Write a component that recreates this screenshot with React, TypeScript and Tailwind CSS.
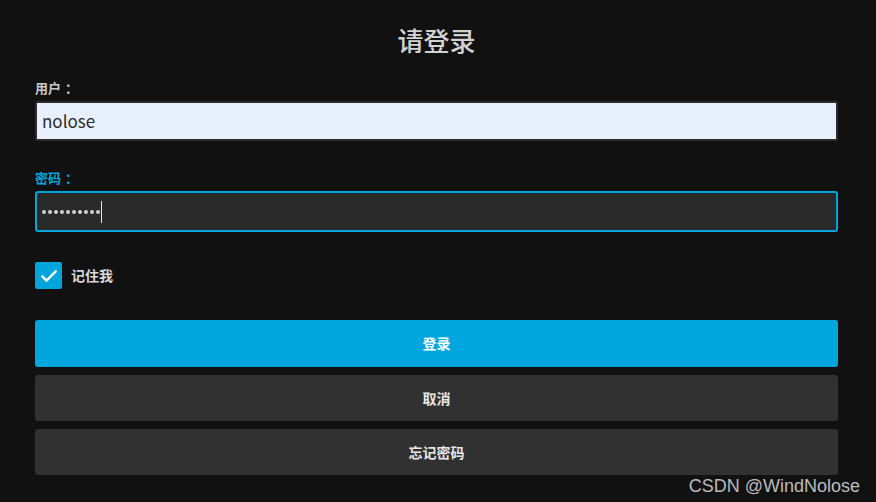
import React from "react";

const font = { fontFamily: '"Noto Sans CJK SC", "Noto Sans", sans-serif' };

const App = () => {
  return (
    <div
      className="relative h-[502px] w-[876px] overflow-hidden bg-[#111111] pl-[35px] pt-[22px]"
      style={font}
    >
      <div className="w-[803px]">
        {/* Title */}
        <h1 className="h-[36px] text-center text-[26px] leading-[36px] font-medium text-[#d2d2d2]">
          请登录
        </h1>

        {/* Username */}
        <label className="mt-[21px] block h-[18px] text-[13px] leading-[18px] font-bold text-[#c8c8c8]">
          用户<span className="ml-[4px]">：</span>
        </label>
        <div className="mt-[4px] flex h-[40px] items-center rounded-[2px] border-2 border-[#2b2b2b] bg-[#e8f0fe] px-[5px]">
          <span className="text-[17px] text-[#2a2a2a]">nolose</span>
        </div>

        {/* Password */}
        <label className="mt-[28px] block h-[18px] text-[13px] leading-[18px] font-bold text-[#00a5dc]">
          密码<span className="ml-[4px]">：</span>
        </label>
        <div className="mt-[4px] flex h-[41px] items-center rounded-[3px] border-2 border-[#00a5dc] bg-[#292929] px-[5px]">
          <div className="flex items-center gap-[2px]">
            {Array.from({ length: 10 }).map((_, i) => (
              <span key={i} className="h-[4px] w-[4px] rounded-full bg-[#d0d0d0]" />
            ))}
          </div>
          <span className="ml-[1px] h-[22px] w-[1px] bg-[#e8e8e8]" />
        </div>

        {/* Remember me */}
        <div className="mt-[30px] flex h-[27px] items-center gap-[9px]">
          <div className="flex h-[27px] w-[27px] items-center justify-center rounded-[2px] bg-[#00a5dc]">
            <svg width="20" height="20" viewBox="0 0 24 24" fill="none">
              <path
                d="M4 12.5l5 5L20 6.5"
                stroke="#ffffff"
                strokeWidth="3"
                strokeLinecap="round"
                strokeLinejoin="round"
              />
            </svg>
          </div>
          <span className="text-[14px] font-bold text-[#d8d8d8]">记住我</span>
        </div>

        {/* Buttons */}
        <div className="mt-[31px] flex flex-col gap-[8px]">
          <button className="h-[47px] w-full rounded-[3px] bg-[#00a6dd] text-[14px] font-bold text-white">
            登录
          </button>
          <button className="h-[46px] w-full rounded-[3px] bg-[#313131] text-[14px] font-bold text-[#e6e6e6]">
            取消
          </button>
          <button className="h-[46px] w-full rounded-[3px] bg-[#313131] text-[14px] font-bold text-[#e6e6e6]">
            忘记密码
          </button>
        </div>
      </div>

      {/* Watermark */}
      <div className="absolute right-[16px] top-[475px] font-['Liberation_Sans',sans-serif] text-[18px] leading-[22px] text-[#bcbcbc]">
        CSDN @WindNolose
      </div>
    </div>
  );
};

export default App;
